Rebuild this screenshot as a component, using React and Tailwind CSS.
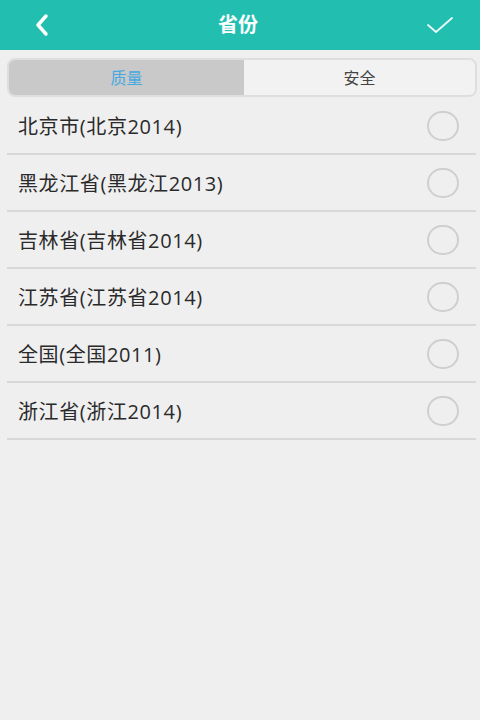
import React from "react";

const items = [
  "北京市(北京2014)",
  "黑龙江省(黑龙江2013)",
  "吉林省(吉林省2014)",
  "江苏省(江苏省2014)",
  "全国(全国2011)",
  "浙江省(浙江2014)",
];

export default function App() {
  return (
    <div
      className="w-[480px] h-[720px] bg-[#efefef] flex flex-col"
      style={{ fontFamily: '"Open Sans", "Noto Sans CJK SC", sans-serif' }}
    >
      <div className="h-[50px] bg-[#22bfb1] flex items-center justify-between px-[34px] shrink-0">
        <svg width="16" height="24" viewBox="0 0 16 24">
          <path d="M12 3 L4 12 L12 21" fill="none" stroke="white" strokeWidth="3.5" strokeLinecap="round" strokeLinejoin="round" />
        </svg>
        <span className="text-white text-[20px] font-bold">省份</span>
        <svg width="28" height="20" viewBox="0 0 28 20" className="mr-[-8px]">
          <path d="M2 10 L10 17 L26 3" fill="none" stroke="#eafaf8" strokeWidth="1.8" strokeLinecap="round" strokeLinejoin="round" />
        </svg>
      </div>
      <div className="mt-[8px] mx-[7px] mr-[3px] h-[39px] flex rounded-[8px] border-2 border-[#dedede] overflow-hidden">
        <div className="w-[235px] bg-[#c9c9c9] flex items-center justify-center text-[#45a8e0] text-[16px]">质量</div>
        <div className="flex-1 bg-[#f2f2f2] flex items-center justify-center text-[#444] text-[16px]">安全</div>
      </div>
      <div className="flex flex-col mt-[1px]">
        {items.map((t) => (
          <div key={t} className="h-[57px] mx-[7px] mr-[4px] border-b-2 border-[#d8d8d8] flex items-center justify-between pl-[11px] pr-[17px]">
            <span className="text-[20px] text-[#2a2a2a] pt-[2px] tracking-[0.6px]">{t}</span>
            <div className="w-[32px] h-[30px] rounded-full border-2 border-[#cfcfcf]" />
          </div>
        ))}
      </div>
    </div>
  );
}
